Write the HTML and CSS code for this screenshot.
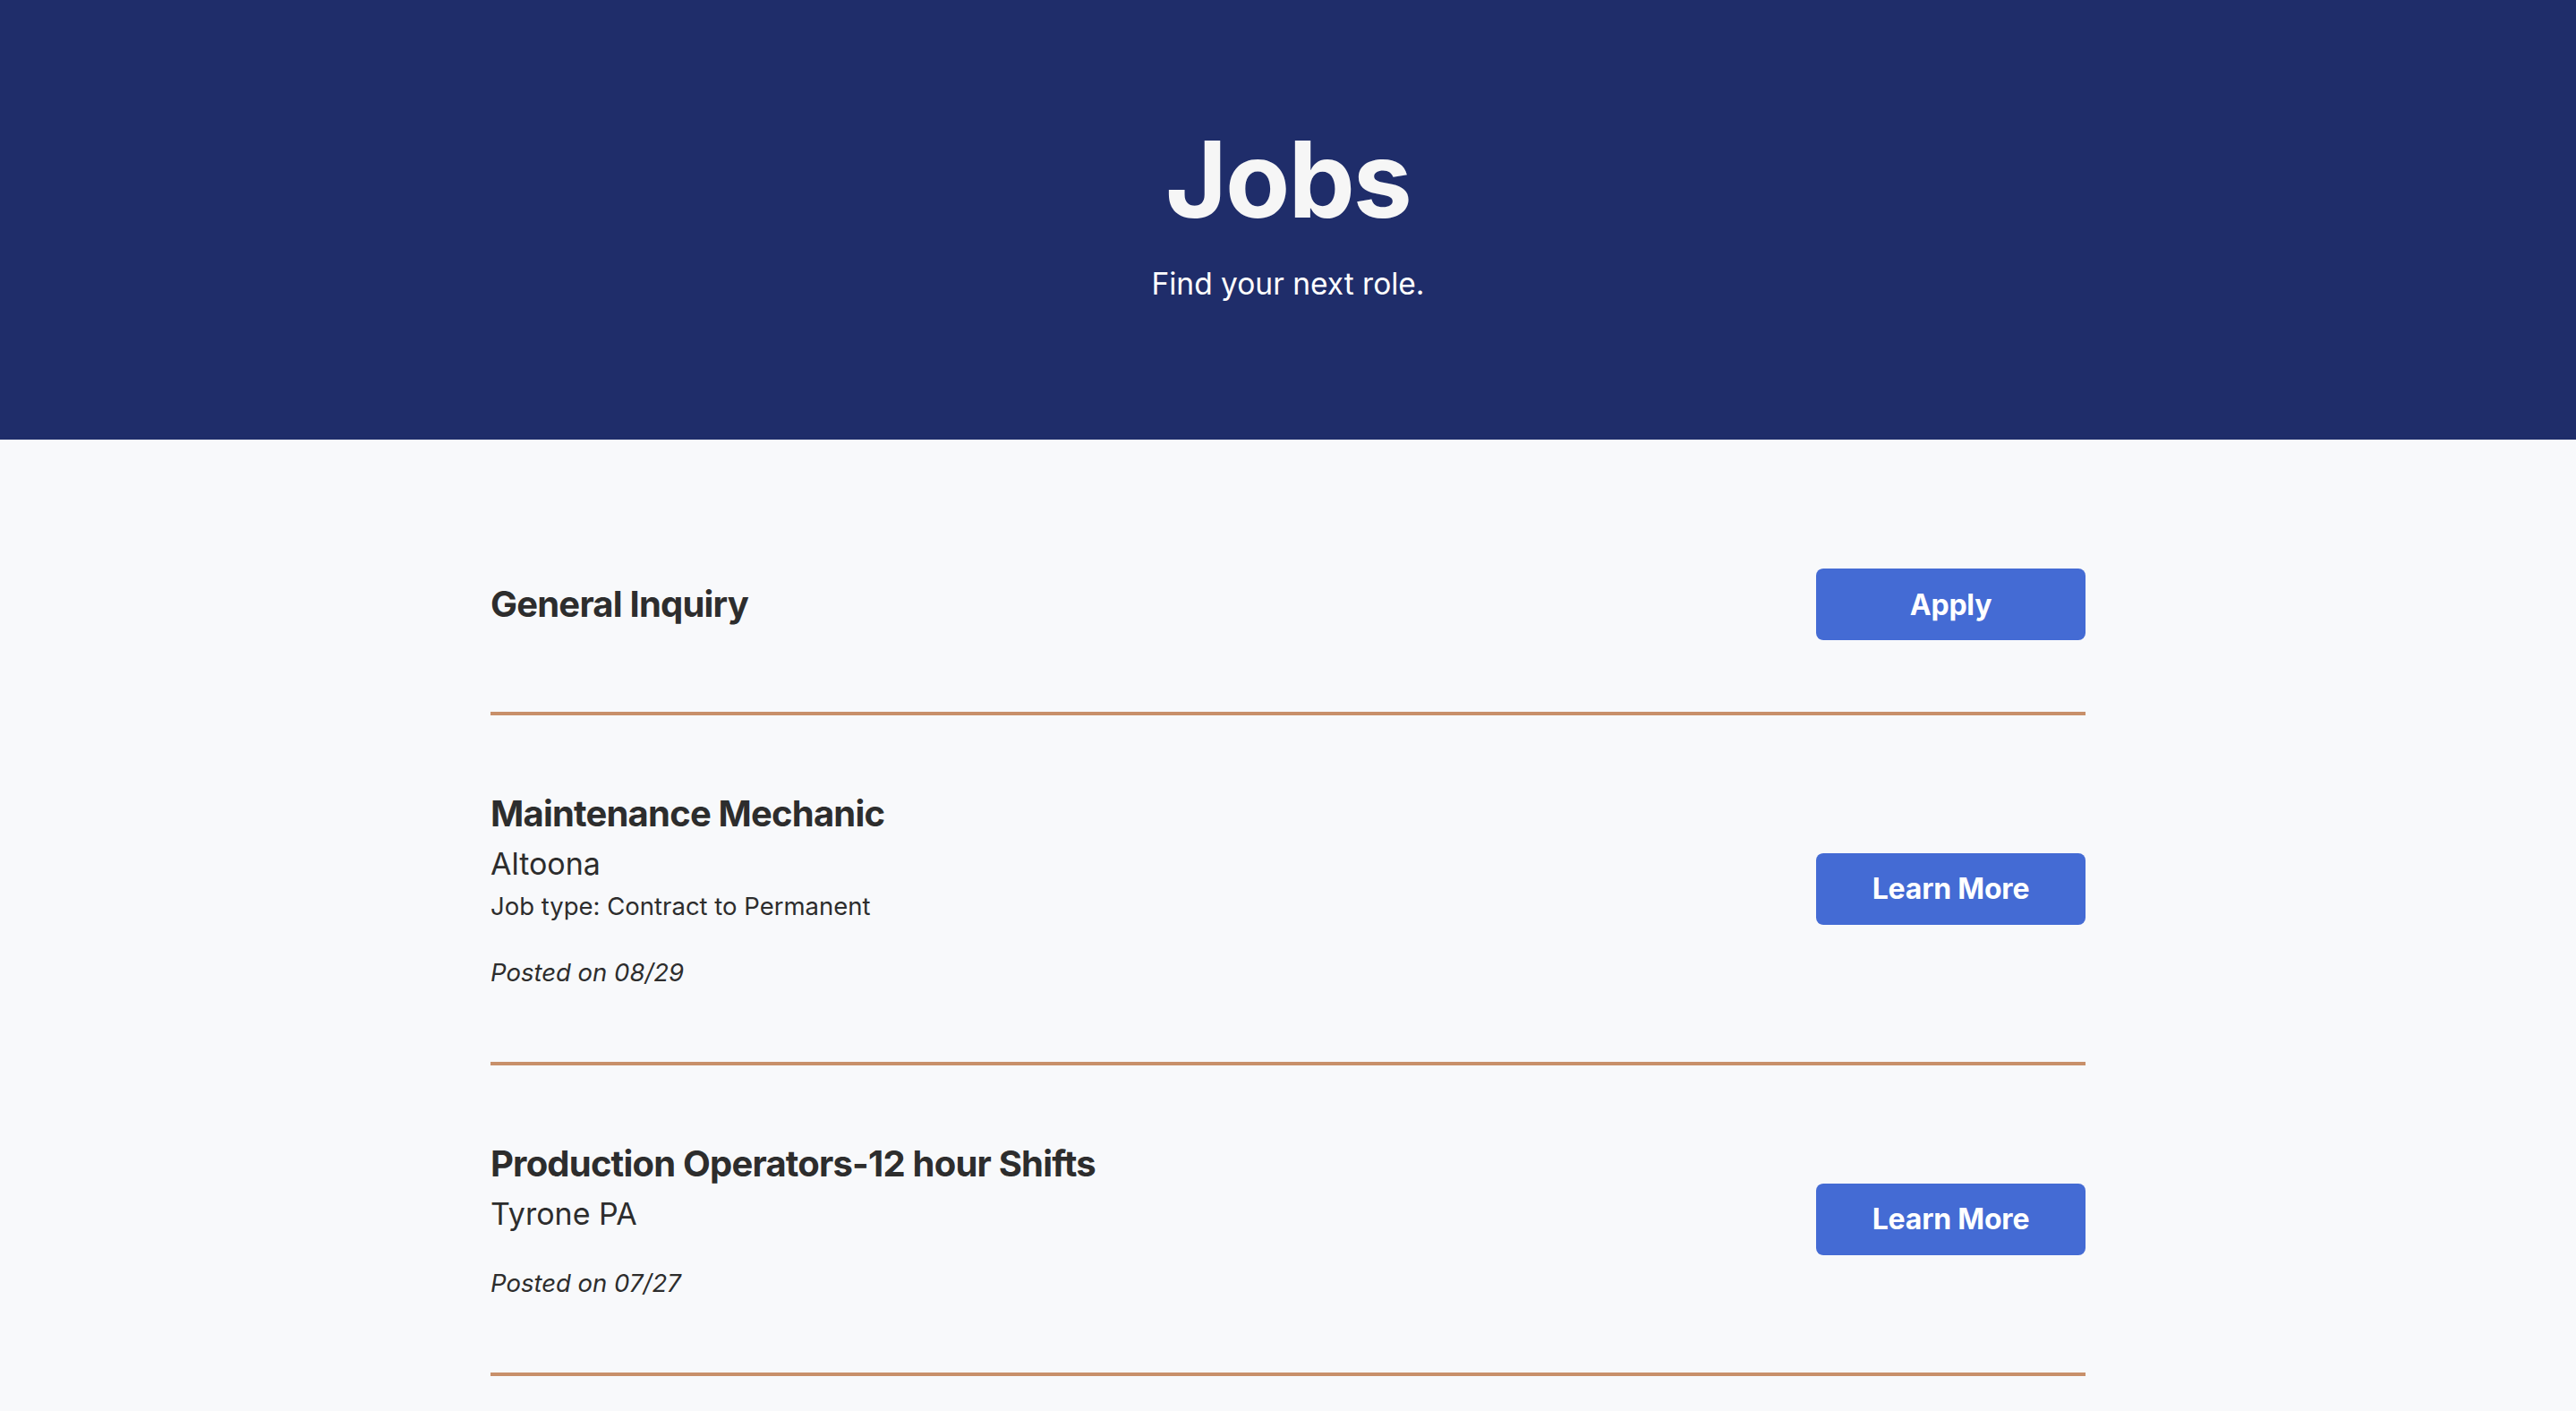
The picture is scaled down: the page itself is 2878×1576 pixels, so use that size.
FILE: index.html
```html
<!DOCTYPE html>
<html lang="en">
<head>
<meta charset="utf-8">
<title>Jobs</title>
<link rel="stylesheet" href="styles.css">
</head>
<body>
<header class="hero">
  <h1 class="hero-title">Jobs</h1>
  <p class="hero-sub">Find your next role.</p>
</header>
<main class="jobs">
  <section class="job">
    <div class="job-info">
      <h2 class="job-title">General Inquiry</h2>
    </div>
    <a class="btn" href="#">Apply</a>
  </section>
  <section class="job">
    <div class="job-info">
      <h2 class="job-title">Maintenance Mechanic</h2>
      <p class="job-loc">Altoona</p>
      <p class="job-type">Job type: Contract to Permanent</p>
      <p class="job-date">Posted on 08/29</p>
    </div>
    <a class="btn" href="#">Learn More</a>
  </section>
  <section class="job">
    <div class="job-info">
      <h2 class="job-title">Production Operators-12 hour Shifts</h2>
      <p class="job-loc">Tyrone PA</p>
      <p class="job-date">Posted on 07/27</p>
    </div>
    <a class="btn" href="#">Learn More</a>
  </section>
</main>
</body>
</html>
```
FILE: styles.css
```css
* { box-sizing: border-box; }
html, body { margin: 0; padding: 0; }
body {
  background: #f8f9fb;
  font-family: Inter, "Noto Sans", "Liberation Sans", sans-serif;
  color: #2d2d2d;
}
.hero {
  background: #1f2d6a;
  height: 491px;
  display: flex;
  flex-direction: column;
  align-items: center;
  padding-top: 130px;
  color: #f6f6f6;
}
.hero-title {
  margin: 0;
  font-size: 118px;
  font-weight: 700;
  line-height: 140px;
  letter-spacing: -2px;
}
.hero-sub {
  margin: 23px 0 0;
  font-size: 33.5px;
  line-height: 48px;
  color: #ffffff;
}
.jobs {
  width: 1782px;
  margin: 0 auto;
  padding-top: 64px;
}
.job {
  display: flex;
  align-items: center;
  justify-content: space-between;
  padding: 80px 0;
  border-bottom: 4px solid #c8906a;
}
.job-title {
  margin: 0;
  font-size: 40px;
  font-weight: 700;
  line-height: 60px;
  letter-spacing: -0.8px;
}
.job-loc {
  margin: 0;
  font-size: 34px;
  line-height: 51px;
}
.job-type {
  margin: 0;
  font-size: 27.5px;
  line-height: 44px;
}
.job-date {
  margin: 32px 0 0;
  font-size: 27.5px;
  line-height: 40px;
  font-style: italic;
}
.btn {
  display: flex;
  align-items: center;
  justify-content: center;
  width: 301px;
  height: 80px;
  background: #446bd4;
  color: #ffffff;
  border-radius: 8px;
  font-size: 32px;
  font-weight: 700;
  letter-spacing: -0.2px;
  text-decoration: none;
  flex-shrink: 0;
}
```
